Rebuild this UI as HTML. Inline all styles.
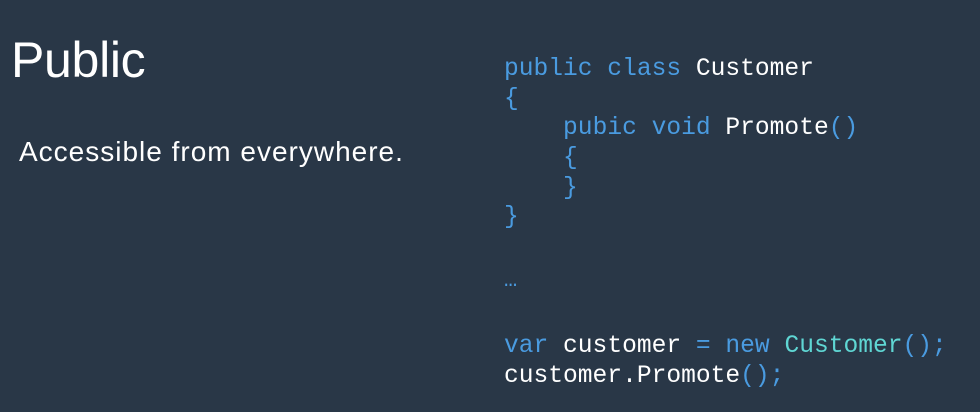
<!DOCTYPE html>
<html><head><style>
body{margin:0;width:980px;height:412px;background:#293747;overflow:hidden;position:relative;font-family:"Liberation Sans",sans-serif;color:#fff}
.t{position:absolute;left:11px;top:30px;font-size:50px;line-height:60px;letter-spacing:-0.3px}
.s{position:absolute;left:19px;top:136px;font-size:28px;line-height:32px;letter-spacing:1px}
.c{position:absolute;left:504px;font-family:"Liberation Mono",monospace;font-size:24.6px;line-height:30px;white-space:pre;color:#fff}
.k{color:#4a9be0}.y{color:#5fd6d3}
</style></head><body>
<div class="t">Public</div>
<div class="s">Accessible from everywhere.</div>
<div class="c" style="top:55px"><span class="k">public class</span> Customer</div>
<div class="c" style="top:85px"><span class="k">{</span></div>
<div class="c" style="top:114px">    <span class="k">pubic void</span> Promote<span class="k">()</span></div>
<div class="c" style="top:144px">    <span class="k">{</span></div>
<div class="c" style="top:174px">    <span class="k">}</span></div>
<div class="c" style="top:203px"><span class="k">}</span></div>
<div class="c" style="top:266px;font-size:22px"><span class="k">…</span></div>
<div class="c" style="top:332px"><span class="k">var</span> customer <span class="k">= new</span> <span class="y">Customer</span><span class="k">();</span></div>
<div class="c" style="top:362px">customer.Promote<span class="k">();</span></div>
</body></html>
